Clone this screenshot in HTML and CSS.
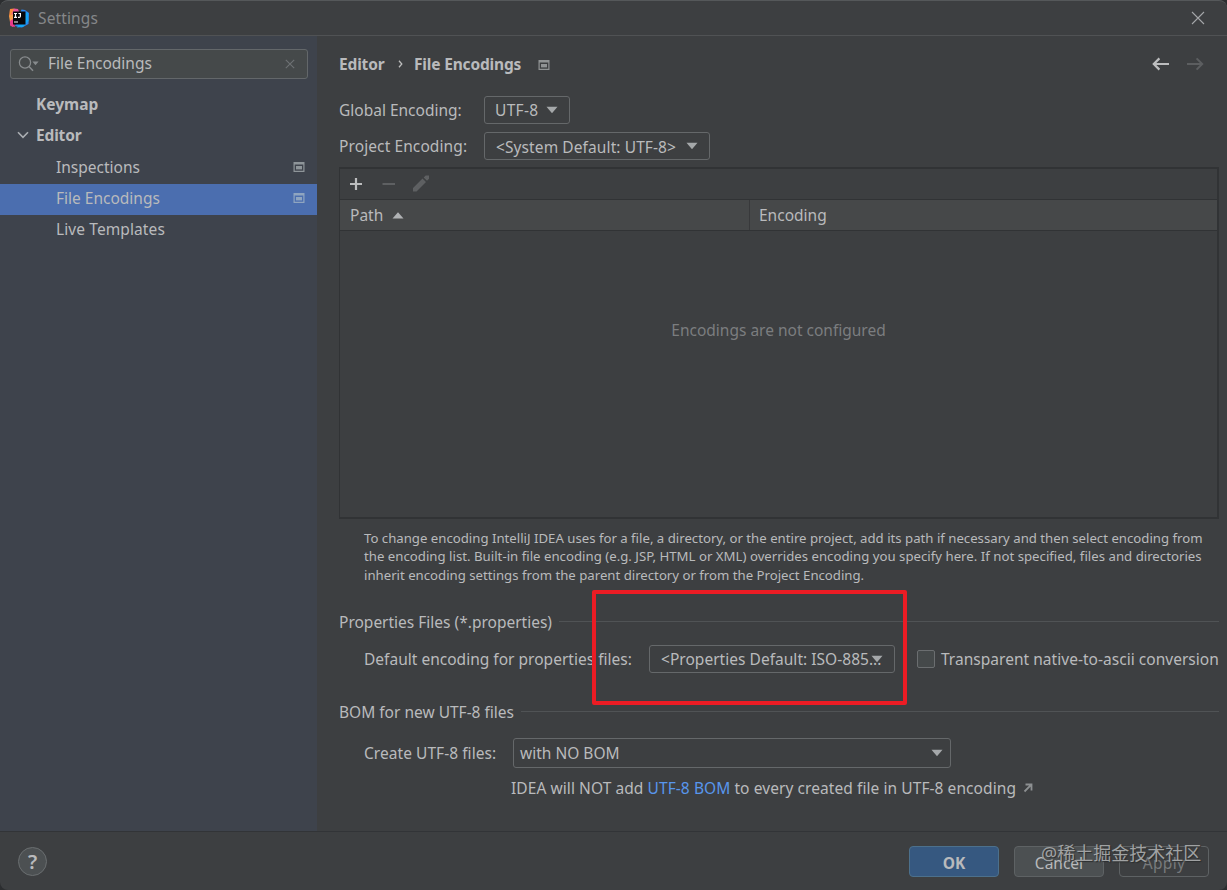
FILE: index.html
```html
<!DOCTYPE html>
<html lang="en">
<head>
<meta charset="utf-8">
<title>Settings</title>
<link rel="stylesheet" href="styles.css">
</head>
<body>
<svg class="defs" width="0" height="0">
  <symbol id="scope" viewBox="0 0 12 10"><path fill="currentColor" fill-rule="evenodd" d="M0.5 0H11.5V10H0.5ZM1.7 2.6V8.8H10.3V2.6Z"/><rect x="3" y="4" width="6" height="3.4" fill="currentColor"/></symbol>
  <symbol id="down" viewBox="0 0 12 8"><path fill="currentColor" d="M.5 .8H11.5L6 7.2Z"/></symbol>
</svg>
<div class="window">
  <header class="titlebar">
    <svg class="logo" width="20" height="20" viewBox="0 0 20 20">
      <path fill="#f98a3c" d="M1 1 5 .5 8 4 4 10 0 8Z"/>
      <path fill="#e8559a" d="M5 .5 9 1 10 4 4 19 1 17 2 8Z"/>
      <path fill="#f7a04b" d="M0 8 4 6 4 12 1 14Z"/>
      <path fill="#e83b8c" d="M1 13 4 11 6 19 1.5 18Z"/>
      <path fill="#2a86f0" d="M12.5 1.5 16 2 20 5 19.5 16 13 19.5 6 18Z"/>
      <path fill="#13a5f5" d="M16 5 19 4.5 19.5 13 14 19 8 19.5Z"/>
      <rect x="4" y="3.5" width="12.5" height="13" fill="#08070a"/>
      <path fill="none" stroke="#fff" stroke-width="1.2" d="M5 5.5H8M6.500 5.500V9.300M5 9.400H8M9.400 5.500H11.400V8.200Q11.300 9.400 10.300 9.400H9M5 14H9"/>
    </svg>
    <span class="t title">Settings</span>
    <svg class="close" width="14" height="14" viewBox="0 0 14 14"><path d="M1 1 13 13M13 1 1 13" stroke="#a4a6a8" stroke-width="1.1"/></svg>
  </header>
  <div class="body">
    <aside class="sidebar">
      <div class="search">
        <svg width="22" height="18" viewBox="0 0 22 18"><circle cx="7" cy="7.5" r="5.6" fill="none" stroke="#878b8d" stroke-width="1.3"/><path d="M11 11.5 15 15.8" stroke="#878b8d" stroke-width="1.6"/><path d="M14.4 6.6H20.6L17.5 10.2Z" fill="#878b8d"/></svg>
        <span class="t query">File Encodings</span>
        <svg class="clear" width="10" height="10" viewBox="0 0 10 10"><path d="M.8 .8 9.2 9.2M9.2 .8 .8 9.2" stroke="#6e7274" stroke-width="1.1"/></svg>
      </div>
      <nav class="tree">
        <div class="node top"><span class="t">Keymap</span></div>
        <div class="node top"><svg class="chev" width="12" height="8" viewBox="0 0 12 8"><path d="M1 1.2 6 6.3 11 1.2" fill="none" stroke="#a9adb1" stroke-width="1.6"/></svg><span class="t tight">Editor</span></div>
        <div class="node"><span class="t">Inspections</span><svg class="scope" width="12" height="10"><use href="#scope"/></svg></div>
        <div class="node selected"><span class="t">File Encodings</span><svg class="scope" width="12" height="10"><use href="#scope"/></svg></div>
        <div class="node"><span class="t loose">Live Templates</span></div>
      </nav>
    </aside>
    <main class="main">
      <div class="crumbs">
        <span class="t tight">Editor</span>
        <svg class="sep" width="5" height="8" viewBox="0 0 5 8"><path d="M1 .8 3.8 4 1 7.2" fill="none" stroke="#bbb" stroke-width="1.3"/></svg>
        <span class="t tight">File Encodings</span>
        <svg class="scope" width="12" height="10"><use href="#scope"/></svg>
        <svg class="arrows" width="52" height="14" viewBox="0 0 52 14"><path d="M17 7H2M7.4 1.4 1.8 7 7.4 12.6" fill="none" stroke="#bcbdbe" stroke-width="2.2"/><path d="M35 7H50M44.6 1.4 50.2 7 44.6 12.6" fill="none" stroke="#5c5e60" stroke-width="2"/></svg>
      </div>
      <div class="row r-global"><label class="t label">Global Encoding:</label><div class="combo w1"><span class="t looser">UTF-8</span><svg class="down" width="12" height="8"><use href="#down"/></svg></div></div>
      <div class="row r-project"><label class="t label loose">Project Encoding:</label><div class="combo w2"><span class="t loose">&lt;System Default: UTF-8&gt;</span><svg class="down" width="12" height="8"><use href="#down"/></svg></div></div>
      <section class="table">
        <div class="tools">
          <svg width="84" height="18" viewBox="0 0 84 18"><path d="M8 3V15M2 9H14" stroke="#bcbdbe" stroke-width="2.2"/><path d="M34.5 9H47" stroke="#5e6062" stroke-width="2"/><path d="M65 13 74.5 3.5 78 7 68.500 16.500H65ZM75.700 2.500 77.700 .5H81V3.800L79 5.800Z" fill="#5e6062"/></svg>
        </div>
        <div class="thead"><div class="th path"><span class="t">Path</span><svg width="12" height="7" viewBox="0 0 12 7"><path d="M.5 6.500H11.5L6 .3Z" fill="#b0b2b4"/></svg></div><div class="th"><span class="t">Encoding</span></div></div>
        <div class="empty"><span class="t">Encodings are not configured</span></div>
      </section>
      <p class="help"><span class="t">To change encoding IntelliJ IDEA uses for a file, a directory, or the entire project, add its path if necessary and then select encoding from</span><span class="t second">the encoding list. Built-in file encoding (e.g. JSP, HTML or XML) overrides encoding you specify here. If not specified, files and directories</span><span class="t">inherit encoding settings from the parent directory or from the Project Encoding.</span></p>
      <div class="section s1"><span class="t">Properties Files (*.properties)</span><i></i></div>
      <div class="row props"><label class="t defenc">Default encoding for properties files:</label><div class="combo w3"><span class="t">&lt;Properties Default: ISO-885...</span><svg class="down" width="12" height="8"><use href="#down"/></svg></div><span class="check"></span><label class="t native">Transparent native-to-ascii conversion</label></div>
      <div class="section s2"><span class="t">BOM for new UTF-8 files</span><i></i></div>
      <div class="row bom"><label class="t create">Create UTF-8 files:</label><div class="combo w4"><span class="t">with NO BOM</span><svg class="down" width="12" height="8"><use href="#down"/></svg></div></div>
      <div class="note"><span class="t">IDEA will NOT add <a>UTF-8 BOM</a> to every created file in UTF-8 encoding</span><svg width="10" height="10" viewBox="0 0 10 10"><path d="M2.5 1.5H8.5V7.5M8.3 1.7 1.5 8.5" fill="none" stroke="#8d9092" stroke-width="1.8"/></svg></div>
    </main>
  </div>
  <footer class="footer">
    <div class="helpbtn"><span>?</span></div>
    <div class="btn ok"><span class="t">OK</span></div><div class="btn cancel"><span class="t">Cancel</span></div><div class="btn apply"><span class="t looser">Apply</span></div>
  </footer>
  <div class="highlight"></div>
  <div class="watermark"><span class="t">@稀土掘金技术社区</span></div>
</div>
</body>
</html>
```
FILE: styles.css
```css
* { box-sizing: border-box; }
body { margin: 0; background: #2c2e30; color: #b9babc; font: 15.5px/20px "Noto Sans", "Noto Sans CJK SC", sans-serif; }
.defs { position: absolute; }
svg { display: block; flex: none; }
.t { white-space: nowrap; flex: none; }
.tight { letter-spacing: -0.17px; }
.loose { letter-spacing: 0.1px; }
.looser { letter-spacing: 0.3px; }
.window { position: relative; width: 1227px; height: 890px; overflow: hidden; background: #3d3f41; display: flex; flex-direction: column; border-top: 1px solid #55585a; border-radius: 8px; }
.titlebar { height: 35px; border-bottom: 1px solid #505254; display: flex; align-items: center; padding: 0 22px 0 9px; }
.title { margin-left: 9px; color: #858789; letter-spacing: 0.12px; }
.close { margin-left: auto; }
.body { height: 795px; display: flex; }
.sidebar { width: 317px; flex: none; background: #3e434c; padding-top: 13px; }
.search { margin-left: 10px; width: 298px; height: 30px; border: 1px solid #63676a; border-radius: 3px; background: #45494a; display: flex; align-items: center; padding: 0 12px 0 7px; }
.query { margin-left: 8px; padding-bottom: 2px; }
.clear { margin-left: auto; }
.tree { padding-top: 12px; }
.node { height: 31px; display: flex; align-items: center; padding: 0 12px 3px 56px; }
.node.top { padding-left: 36px; padding-bottom: 6px; font-weight: 700; }
.chev { margin-left: -19px; margin-right: 7px; }
.node .scope { margin-left: auto; color: #8e9599; }
.node.selected { background: #4b6eaf; }
.node.selected .scope { color: #8fa5c0; }
.main { flex: 1; min-width: 0; padding: 17px 8px 0 22px; }
.crumbs { display: flex; align-items: center; height: 22px; font-weight: 700; }
.sep { margin: 0 10.5px 0 14px; }
.crumbs .scope { margin-left: 17px; color: #909394; position: relative; top: 1px; }
.arrows { margin-left: auto; margin-right: 15px; }
.row { display: flex; align-items: center; height: 28px; }
.label { width: 145px; }
.r-global { margin-top: 21px; }
.r-project { margin-top: 8px; }
.r-project .t.label { padding-bottom: 1px; }
.r-project .combo .t { padding-top: 2px; }
.combo { height: 28px; border: 1px solid #65686a; border-radius: 3px; display: flex; align-items: center; padding: 0 11px; flex: none; }
.down { margin-left: auto; color: #a5a8aa; }
.w1 { width: 86px; padding-left: 10px; }
.w2 { width: 226px; }
.w3 { width: 246px; margin-left: 17px; }
.w3 .t { letter-spacing: 0.03px; }
.w3 .down { margin-left: -10px; }
.w4 { width: 438px; height: 30px; padding: 0 7px 0 6px; }
.table { margin-top: 7px; height: 352px; width: 880px; border: 1px solid #313335; border-width: 2px 2px 2px 1px; }
.tools { height: 30px; padding: 6px 8px; }
.thead { display: flex; height: 32px; border: 1px solid #313335; border-width: 1px 0; background: #464849; }
.th { display: flex; align-items: center; padding-left: 9px; gap: 9px; }
.th.path { width: 410px; border-right: 1px solid #38393b; padding-left: 10px; }
.empty { display: flex; justify-content: center; padding-top: 89px; color: #7b7d7f; }
.help { margin: 10px 0 0 25px; height: 55.5px; display: flex; flex-direction: column; font-size: 13.2px; line-height: 18.5px; }
.help .second { line-height: 17.5px; padding-bottom: 1px; letter-spacing: 0.016px; }
.section { display: flex; align-items: center; gap: 7px; height: 20px; }
.section i { flex: 1; height: 1px; background: #505355; }
.s1 { margin-top: 27px; }
.props { margin: 13px 0 0 25px; }
.defenc { width: 268px; letter-spacing: 0.015px; }
.check { width: 18px; height: 18px; border: 1px solid #6b6e70; border-radius: 2px; background: #45494a; margin: 0 6px 0 22px; flex: none; }
.native { letter-spacing: 0.03px; }
.s2 { margin-top: 29px; }
.bom { margin: 17px 0 0 25px; }
.create { width: 149px; letter-spacing: 0.05px; }
.note { display: flex; align-items: center; gap: 7px; margin: 11px 0 0 172px; letter-spacing: 0.075px; }
.note a { color: #5896ec; }
.footer { height: 59px; border-top: 1px solid #323437; display: flex; padding: 14px 18px; }
.helpbtn { width: 29px; height: 29px; border-radius: 50%; border: 1px solid #6a6e70; background: #4c5052; display: flex; align-items: center; justify-content: center; font-size: 20px; font-weight: 600; margin-right: auto; margin-top: 1px; }
.btn { width: 90px; height: 31px; margin-left: 15px; border: 1px solid #5e6264; border-radius: 4px; display: flex; align-items: center; justify-content: center; background: #4c5052; padding-top: 2px; }
.ok { background: #365880; border-color: #4c708c; font-weight: 700; }
.apply { background: none; color: #777a7c; }
.highlight { position: absolute; left: 592px; top: 589px; width: 315px; height: 115px; border: 4px solid #ec1c24; border-radius: 2px; }
.watermark { position: absolute; left: 1041px; top: 839px; font-size: 18px; line-height: 26px; color: #a0a2a3; text-shadow: 1px 1px 1px #2b2d2e; }
```
